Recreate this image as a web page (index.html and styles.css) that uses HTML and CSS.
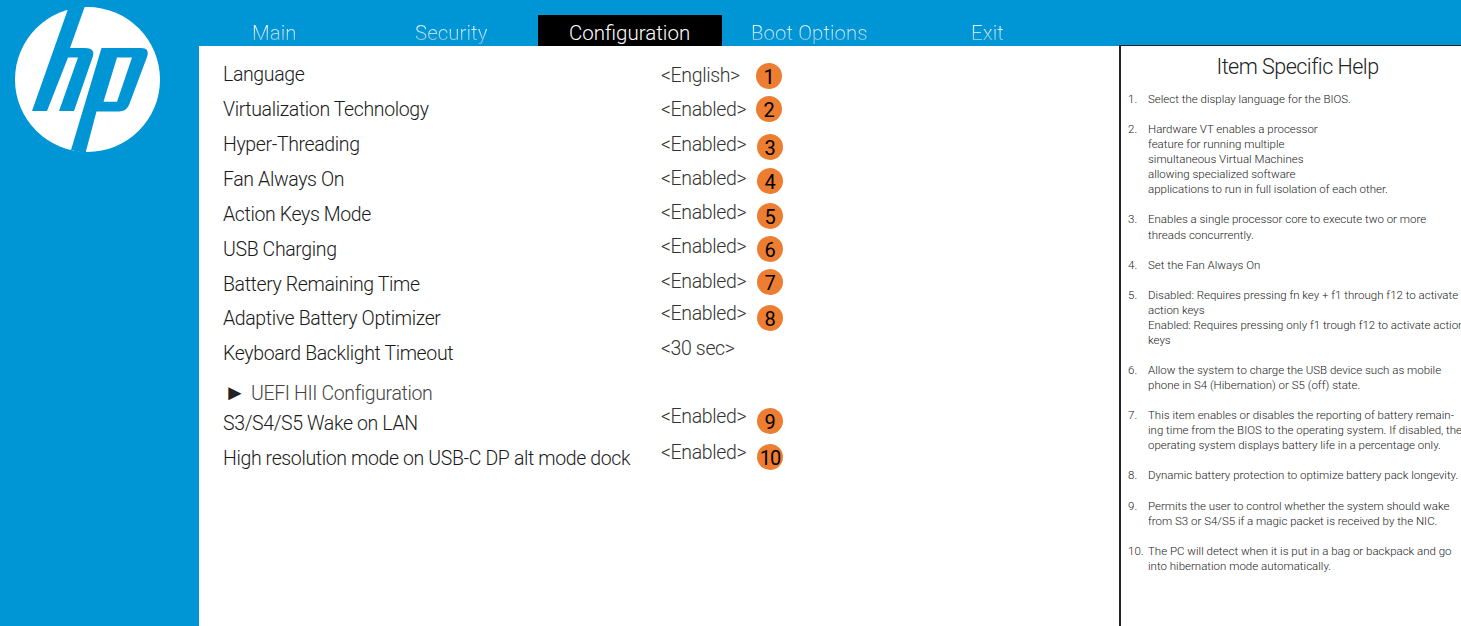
FILE: index.html
```html
<!DOCTYPE html>
<html lang="en">
<head>
<meta charset="utf-8">
<title>BIOS Configuration</title>
<link rel="stylesheet" href="styles.css">
</head>
<body>
<div class="screen">
  <aside class="side">
    <svg class="logo" viewBox="0 0 175 160" width="175" height="160" aria-label="HP">
      <circle cx="87.5" cy="79.5" r="72.5" fill="#fff"/>
      <path fill="#0096d6" d="M68 9 L85 6 L70 48 L85 48 Q95 48 93 56 L74 111 L59 111 L78 57.5 L68 57.5 L47 111 L32 111 Z"/>
      <path fill="#0096d6" fill-rule="evenodd" d="M101.5 48 L141 48 Q150 48 147 57 L129 105 Q126 111.5 119 111.5 L96.5 111.5 L85.5 153 L71 150 Z M117 57.5 L132 57.5 L117 101.7 L103.5 101.7 Z"/>
    </svg>
  </aside>
  <div class="main">
    <nav class="tabs">
      <span class="tab t-main"><span class="dim">Main</span></span>
      <span class="tab t-sec"><span class="dim">Security</span></span>
      <span class="tab active">Configuration</span>
      <span class="tab t-boot"><span class="dim">Boot Options</span></span>
      <span class="tab"><span class="dim">Exit</span></span>
    </nav>
    <div class="body">
      <section class="settings">
        <div class="col labels">
          <div class="r35">Language</div>
          <div class="r35">Virtualization Technology</div>
          <div class="r35">Hyper-Threading</div>
          <div class="r35">Fan Always On</div>
          <div class="r35">Action Keys Mode</div>
          <div class="r35">USB Charging</div>
          <div class="r34">Battery Remaining Time</div>
          <div class="r35">Adaptive Battery Optimizer</div>
          <div class="r39">Keyboard Backlight Timeout</div>
          <div class="r31 sub"><span class="arrow">►</span>UEFI HII Configuration</div>
          <div class="r35">S3/S4/S5 Wake on LAN</div>
          <div class="r35">High resolution mode on USB-C DP alt mode dock</div>
        </div>
        <div class="col values">
          <div class="r34">&lt;English&gt;</div>
          <div class="r35">&lt;Enabled&gt;</div>
          <div class="r34">&lt;Enabled&gt;</div>
          <div class="r34">&lt;Enabled&gt;</div>
          <div class="r34">&lt;Enabled&gt;</div>
          <div class="r35">&lt;Enabled&gt;</div>
          <div class="r32">&lt;Enabled&gt;</div>
          <div class="r35">&lt;Enabled&gt;</div>
          <div class="r68">&lt;30 sec&gt;</div>
          <div class="r36">&lt;Enabled&gt;</div>
          <div class="r35">&lt;Enabled&gt;</div>
        </div>
        <div class="col badges">
          <div class="r33"><span class="badge">1</span></div>
          <div class="r38"><span class="badge">2</span></div>
          <div class="r34"><span class="badge nudge">3</span></div>
          <div class="r35"><span class="badge nudge">4</span></div>
          <div class="r33"><span class="badge nudge">5</span></div>
          <div class="r33"><span class="badge nudge">6</span></div>
          <div class="r36"><span class="badge nudge">7</span></div>
          <div class="r103"><span class="badge nudge">8</span></div>
          <div class="r36"><span class="badge nudge">9</span></div>
          <div class="r35"><span class="badge nudge tight">10</span></div>
        </div>
      </section>
      <aside class="help">
        <h2 class="help-title">Item Specific Help</h2>
        <div class="help-list">
          <div class="item"><span>1.</span><p>Select the display language for the BIOS.</p></div>
          <div class="item"><span>2.</span><p>Hardware VT enables a processor<br>feature for running multiple<br>simultaneous Virtual Machines<br>allowing specialized software<br>applications to run in full isolation of each other.</p></div>
          <div class="item"><span>3.</span><p>Enables a single processor core to execute two or more<br>threads concurrently.</p></div>
          <div class="item"><span>4.</span><p>Set the Fan Always On</p></div>
          <div class="item"><span>5.</span><p>Disabled: Requires pressing fn key + f1 through f12 to activate<br>action keys<br>Enabled: Requires pressing only f1 trough f12 to activate action<br>keys</p></div>
          <div class="item"><span>6.</span><p>Allow the system to charge the USB device such as mobile<br>phone in S4 (Hibernation) or S5 (off) state.</p></div>
          <div class="item"><span>7.</span><p>This item enables or disables the reporting of battery remain-<br>ing time from the BIOS to the operating system. If disabled, the<br>operating system displays battery life in a percentage only.</p></div>
          <div class="item"><span>8.</span><p>Dynamic battery protection to optimize battery pack longevity.</p></div>
          <div class="item"><span>9.</span><p>Permits the user to control whether the system should wake<br>from S3 or S4/S5 if a magic packet is received by the NIC.</p></div>
          <div class="item"><span>10.</span><p>The PC will detect when it is put in a bag or backpack and go<br>into hibernation mode automatically.</p></div>
        </div>
      </aside>
    </div>
  </div>
</div>
</body>
</html>
```
FILE: styles.css
```css
* { box-sizing: border-box; }
html, body { margin: 0; height: 100%; overflow: hidden; }
body { font-family: "Roboto", "Liberation Sans", sans-serif; font-weight: 300; color: #1a1a1a; background: #fff; }
.screen { display: flex; width: 1461px; height: 626px; overflow: hidden; background: #0096d6; }
.side { width: 199px; flex: none; }
.logo { display: block; }
.main { flex: 1; display: flex; flex-direction: column; min-width: 0; }
.tabs { height: 46px; flex: none; display: flex; align-items: flex-end; padding-left: 53px; font-size: 20.5px; }
.tab { height: 31px; line-height: 36px; white-space: nowrap; }
.dim { background: linear-gradient(#dff2fb 25%, #8cc2da 80%); -webkit-background-clip: text; background-clip: text; color: transparent; }
.t-main { width: 163px; }
.t-sec { width: 123px; }
.active { width: 184px; padding-left: 31px; background: #000; color: #fff; margin-right: 29px; }
.t-boot { width: 220px; }
.body { flex: 1; display: flex; background: #fff; min-height: 0; }
.settings { width: 920px; flex: none; display: flex; padding-left: 24px; padding-top: 11px; font-size: 19.5px; letter-spacing: -0.37px; }
.col { display: flex; flex-direction: column; white-space: nowrap; }
.col > div { line-height: 35px; }
.labels { width: 438px; }
.values { width: 95px; padding-top: 1px; color: #333; }
.r31 { height: 31px; }
.r32 { height: 32px; }
.r33 { height: 33px; }
.r34 { height: 34px; }
.r35 { height: 35px; }
.r36 { height: 36px; }
.r38 { height: 38px; }
.r39 { height: 39px; }
.r68 { height: 68px; }
.r103 { height: 103px; }
.sub { color: #444; }
.arrow { display: inline-block; width: 28px; padding-left: 1px; font-size: 22px; color: #222; letter-spacing: 0; }
.badges { padding-top: 6px; letter-spacing: 0; }
.badge { display: block; width: 26px; height: 26px; border-radius: 50%; background: #ed7d31; color: #000; font-size: 20px; font-weight: 400; line-height: 29px; text-align: center; }
.nudge { margin-left: 1px; }
.tight { letter-spacing: -1px; }
.help { flex: 1; min-width: 0; border-left: 2px solid #222; border-top: 1px solid #222; margin-top: -1px; overflow: hidden; padding-top: 6px; background: #fff; }
.help-title { margin: 0; padding-left: 13px; font-size: 21.5px; font-weight: 300; letter-spacing: -0.5px; line-height: 30px; text-align: center; color: #222; }
.help-list { margin: 10px 0 0; padding-left: 7px; font-size: 11.5px; line-height: 15.06px; color: #222; white-space: nowrap; }
.item { display: flex; margin-bottom: 15.06px; }
.item span { width: 20px; flex: none; }
.item p { margin: 0; }
```
